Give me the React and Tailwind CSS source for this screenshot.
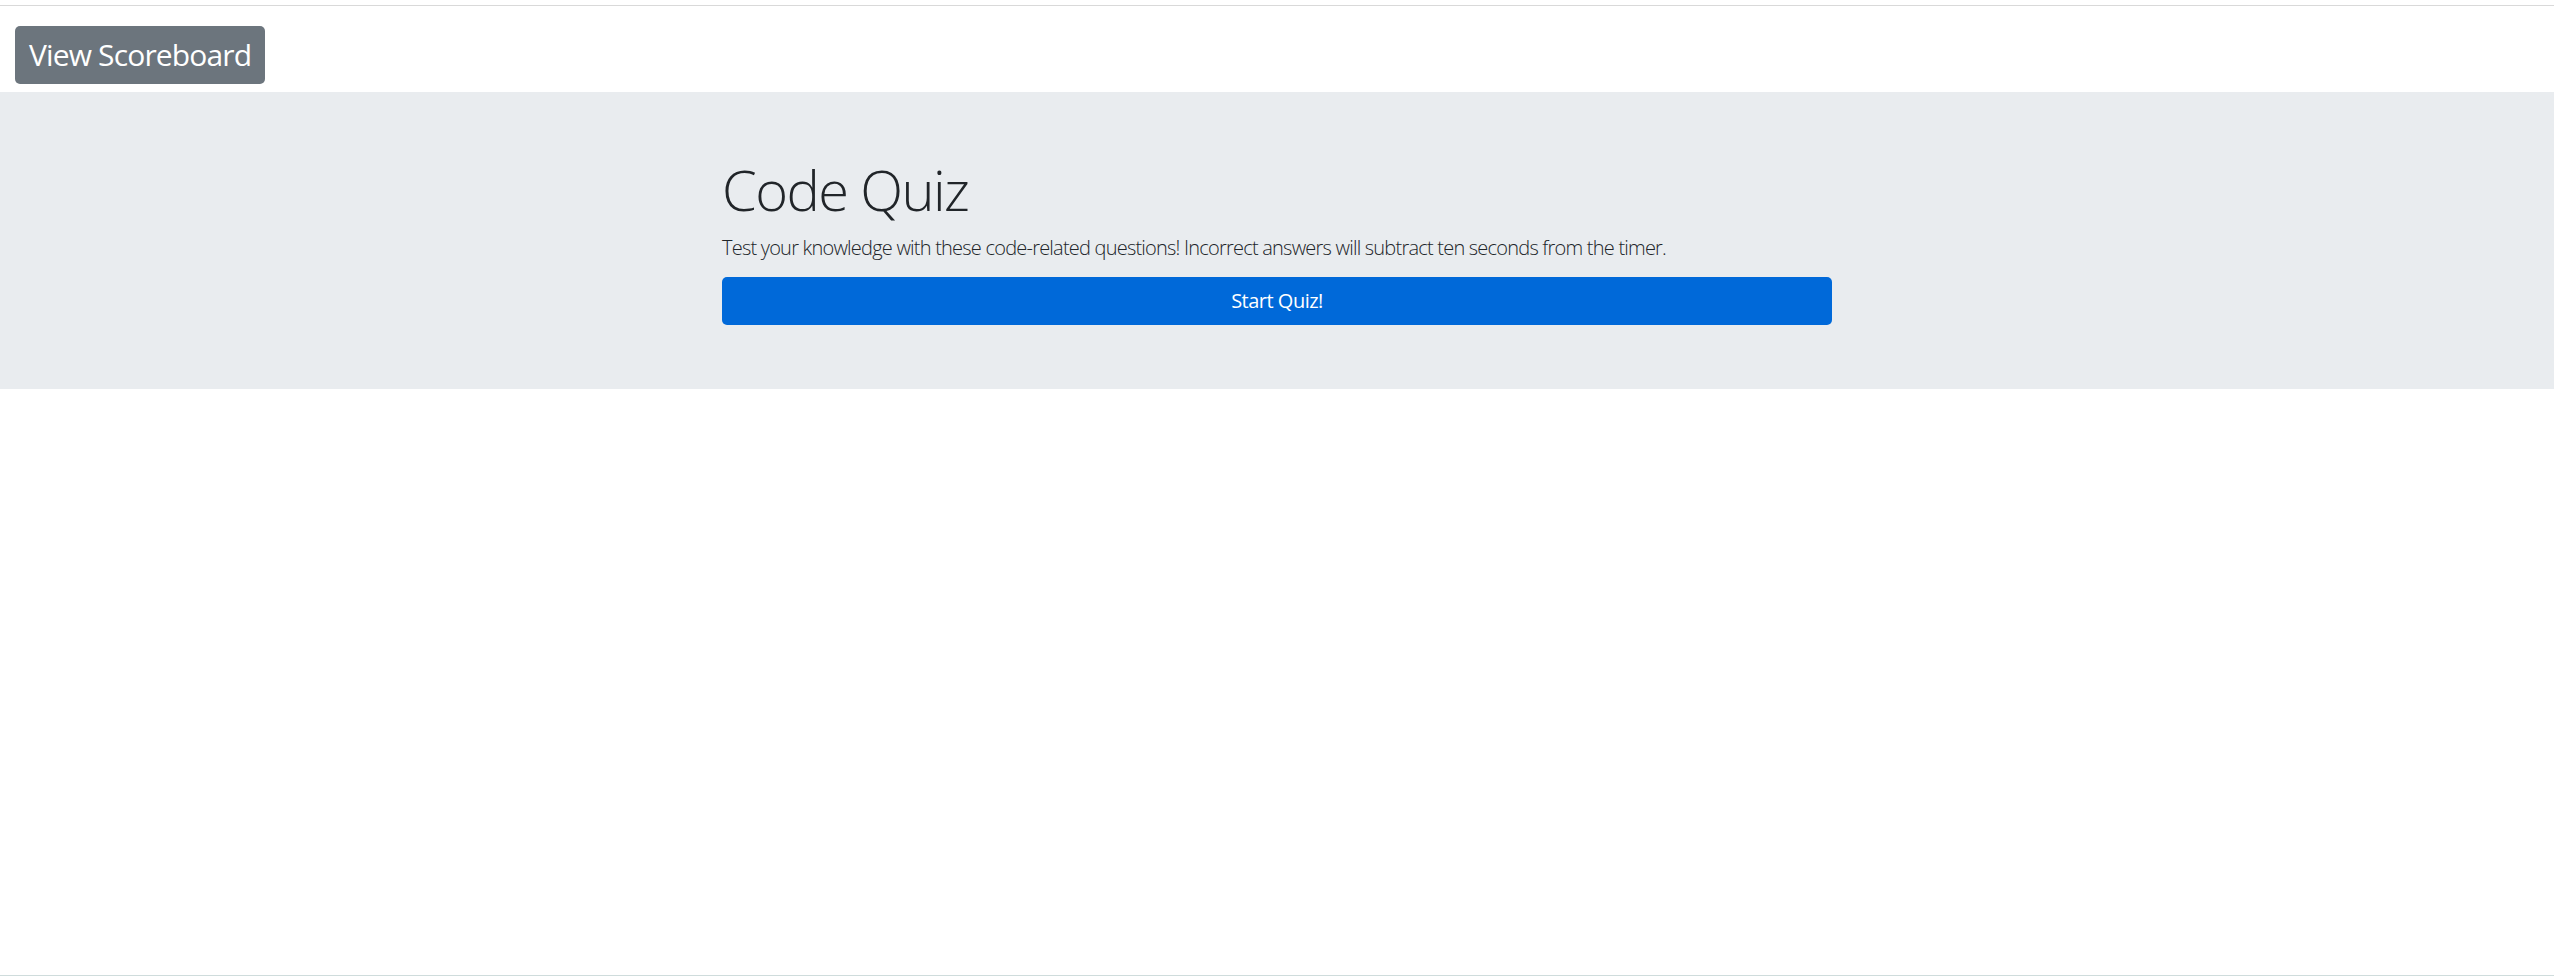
import React from 'react';

const font = { fontFamily: '"Open Sans", "Noto Sans", Arial, sans-serif' };

const App = () => {
  return (
    <div className="min-h-screen bg-white flex flex-col text-[#212529]" style={font}>
      {/* thin rule at the very top */}
      <div className="h-[5px] bg-white" />
      <div className="h-px bg-[#d9d9d9]" />

      <div className="pt-[20px] pl-[15px] mb-[8px]">
        <button className="h-[58px] px-[14px] rounded-[5px] bg-[#6c757d] text-white text-[30px] leading-none font-normal tracking-[-0.85px]">
          View Scoreboard
        </button>
      </div>

      <section className="bg-[#e9ecef] pt-[64px] pb-[64px]">
        <div className="w-[1140px] mx-auto px-[15px]">
          <h1 className="text-[56px] font-light leading-[1.2] mb-[10px] tracking-[-1.6px]">Code Quiz</h1>
          <p className="text-[20px] font-light leading-[1.5] mb-[14px] tracking-[-0.78px]">
            Test your knowledge with these code-related questions! Incorrect answers will subtract ten seconds from the timer.
          </p>
          <button className="w-full h-[48px] rounded-[5px] bg-[#0069d9] text-white text-[20px] font-normal tracking-[-0.5px]">
            Start Quiz!
          </button>
        </div>
      </section>

      <div className="flex-grow" />
      <div className="h-px bg-[#cfdcdc]" />
    </div>
  );
};

export default App;
